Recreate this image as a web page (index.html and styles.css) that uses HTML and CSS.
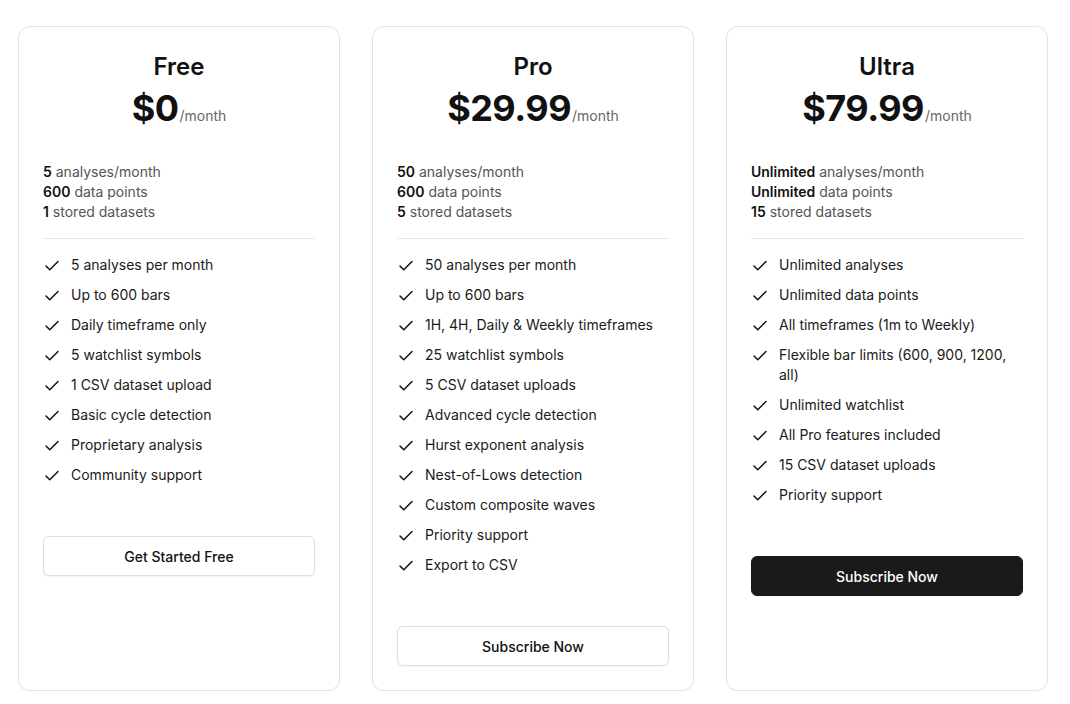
FILE: index.html
```html
<!DOCTYPE html>
<html lang="en">
<head>
<meta charset="utf-8">
<title>Pricing</title>
<link rel="stylesheet" href="styles.css">
</head>
<body>
<svg width="0" height="0" class="defs" aria-hidden="true">
  <symbol id="check" viewBox="0 0 24 24"><path d="M20 6 9 17l-5-5" fill="none" stroke="currentColor" stroke-width="2" stroke-linecap="round" stroke-linejoin="round"/></symbol>
</svg>
<main class="plans">
  <section class="card">
    <header class="head">
      <h2 class="title">Free</h2>
      <div class="price"><span class="amount">$0</span><span class="per">/month</span></div>
    </header>
    <div class="stats">
      <div><b>5</b> analyses/month</div>
      <div><b>600</b> data points</div>
      <div><b>1</b> stored datasets</div>
    </div>
    <ul class="features">
      <li><svg class="ic"><use href="#check"/></svg><span>5 analyses per month</span></li>
      <li><svg class="ic"><use href="#check"/></svg><span>Up to 600 bars</span></li>
      <li><svg class="ic"><use href="#check"/></svg><span>Daily timeframe only</span></li>
      <li><svg class="ic"><use href="#check"/></svg><span>5 watchlist symbols</span></li>
      <li><svg class="ic"><use href="#check"/></svg><span>1 CSV dataset upload</span></li>
      <li><svg class="ic"><use href="#check"/></svg><span>Basic cycle detection</span></li>
      <li><svg class="ic"><use href="#check"/></svg><span>Proprietary analysis</span></li>
      <li><svg class="ic"><use href="#check"/></svg><span>Community support</span></li>
    </ul>
    <button class="btn">Get Started Free</button>
  </section>

  <section class="card">
    <header class="head">
      <h2 class="title">Pro</h2>
      <div class="price"><span class="amount">$29.99</span><span class="per">/month</span></div>
    </header>
    <div class="stats">
      <div><b>50</b> analyses/month</div>
      <div><b>600</b> data points</div>
      <div><b>5</b> stored datasets</div>
    </div>
    <ul class="features">
      <li><svg class="ic"><use href="#check"/></svg><span>50 analyses per month</span></li>
      <li><svg class="ic"><use href="#check"/></svg><span>Up to 600 bars</span></li>
      <li><svg class="ic"><use href="#check"/></svg><span>1H, 4H, Daily &amp; Weekly timeframes</span></li>
      <li><svg class="ic"><use href="#check"/></svg><span>25 watchlist symbols</span></li>
      <li><svg class="ic"><use href="#check"/></svg><span>5 CSV dataset uploads</span></li>
      <li><svg class="ic"><use href="#check"/></svg><span>Advanced cycle detection</span></li>
      <li><svg class="ic"><use href="#check"/></svg><span>Hurst exponent analysis</span></li>
      <li><svg class="ic"><use href="#check"/></svg><span>Nest-of-Lows detection</span></li>
      <li><svg class="ic"><use href="#check"/></svg><span>Custom composite waves</span></li>
      <li><svg class="ic"><use href="#check"/></svg><span>Priority support</span></li>
      <li><svg class="ic"><use href="#check"/></svg><span>Export to CSV</span></li>
    </ul>
    <button class="btn">Subscribe Now</button>
  </section>

  <section class="card">
    <header class="head">
      <h2 class="title">Ultra</h2>
      <div class="price"><span class="amount">$79.99</span><span class="per">/month</span></div>
    </header>
    <div class="stats">
      <div><b>Unlimited</b> analyses/month</div>
      <div><b>Unlimited</b> data points</div>
      <div><b>15</b> stored datasets</div>
    </div>
    <ul class="features">
      <li><svg class="ic"><use href="#check"/></svg><span>Unlimited analyses</span></li>
      <li><svg class="ic"><use href="#check"/></svg><span>Unlimited data points</span></li>
      <li><svg class="ic"><use href="#check"/></svg><span>All timeframes (1m to Weekly)</span></li>
      <li><svg class="ic"><use href="#check"/></svg><span>Flexible bar limits (600, 900, 1200, all)</span></li>
      <li><svg class="ic"><use href="#check"/></svg><span>Unlimited watchlist</span></li>
      <li><svg class="ic"><use href="#check"/></svg><span>All Pro features included</span></li>
      <li><svg class="ic"><use href="#check"/></svg><span>15 CSV dataset uploads</span></li>
      <li><svg class="ic"><use href="#check"/></svg><span>Priority support</span></li>
    </ul>
    <button class="btn btn-dark">Subscribe Now</button>
  </section>
</main>
</body>
</html>
```

FILE: styles.css
```css
* { box-sizing: border-box; }

html, body {
  margin: 0;
  padding: 0;
  background: #ffffff;
}

body {
  font-family: Inter, "Noto Sans", "Liberation Sans", sans-serif;
  color: #111111;
  -webkit-font-smoothing: antialiased;
}

.defs {
  position: absolute;
  width: 0;
  height: 0;
  overflow: hidden;
}

.plans {
  display: grid;
  grid-template-columns: repeat(3, 322px);
  column-gap: 32px;
  align-items: stretch;
  padding: 26px 0 0 18px;
}

.card {
  display: flex;
  flex-direction: column;
  border: 1px solid #e3e3e3;
  border-radius: 12px;
  padding: 24px;
  background: #fff;
  box-shadow: 0 1px 2px rgba(0, 0, 0, 0.04);
}

.head {
  text-align: center;
}

.title {
  margin: 0;
  font-size: 24px;
  line-height: 32px;
  font-weight: 600;
  color: #111;
}

.price {
  margin-top: 5px;
  line-height: 40px;
  height: 40px;
}

.amount {
  font-size: 36px;
  font-weight: 700;
  letter-spacing: -0.5px;
  color: #111;
}

.per {
  font-size: 14px;
  color: #666;
  margin-left: 1px;
}

.stats {
  margin-top: 34px;
  padding-bottom: 16px;
  border-bottom: 1px solid #e5e5e5;
  font-size: 14px;
  line-height: 20px;
  color: #555;
}

.stats b {
  font-weight: 600;
  color: #111;
}

.features {
  list-style: none;
  margin: 16px 0 0;
  padding: 0;
  display: flex;
  flex-direction: column;
  gap: 10px;
  font-size: 14px;
  line-height: 20px;
  color: #1a1a1a;
}

.features li {
  display: flex;
  align-items: flex-start;
  gap: 10px;
}

.ic {
  flex: none;
  width: 18px;
  height: 18px;
  margin-top: 2px;
  color: #111;
}

.btn {
  margin-top: 51px;
  height: 40px;
  width: 100%;
  border: 1px solid #dedede;
  border-radius: 6px;
  background: #fff;
  font-family: inherit;
  font-size: 14px;
  font-weight: 500;
  color: #111;
  box-shadow: 0 1px 2px rgba(0, 0, 0, 0.05);
}

.btn-dark {
  background: #1a1a1a;
  border-color: #1a1a1a;
  color: #fff;
}
```
